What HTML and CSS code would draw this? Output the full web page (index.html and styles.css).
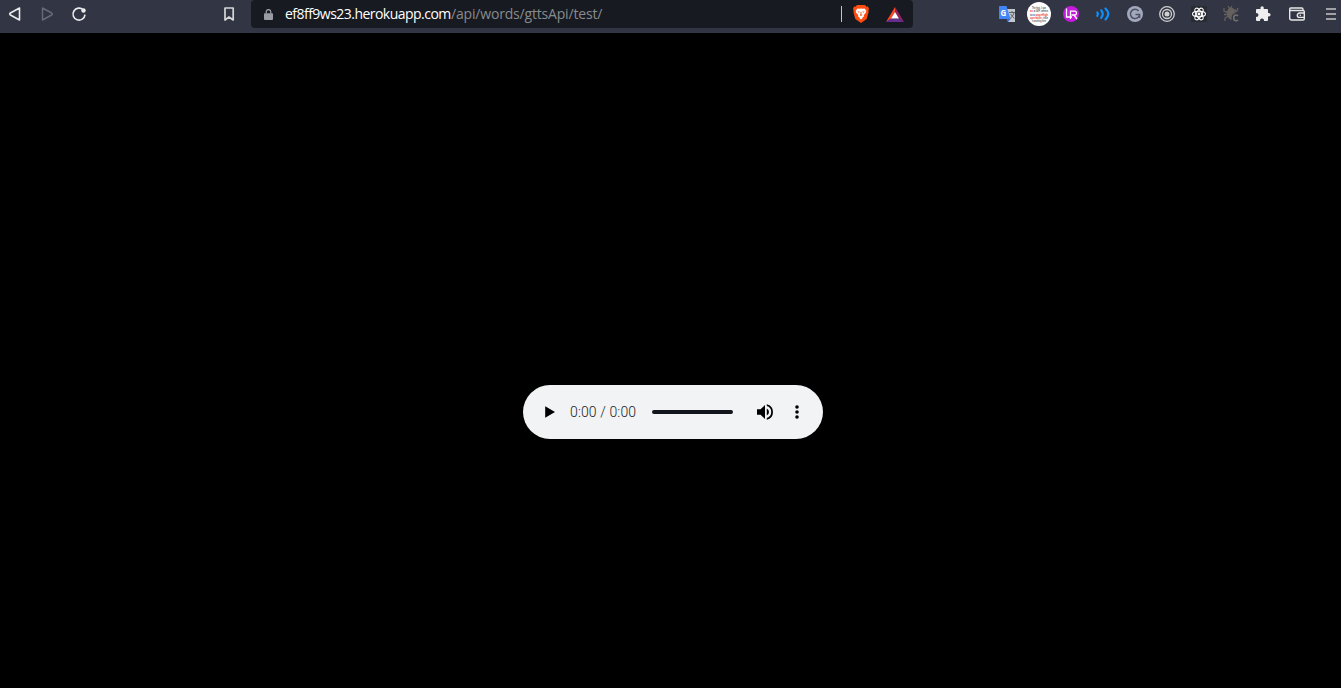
FILE: index.html
```html
<!DOCTYPE html>
<html lang="en">
<head>
<meta charset="utf-8">
<title>Audio</title>
<link rel="stylesheet" href="styles.css">
</head>
<body>
<header class="toolbar">
  <nav class="nav">
    <svg class="icon light" viewBox="0 0 32 28"><path d="M20.500 8v12L11.400 15q-1.400-1 0-2z"/></svg>
    <svg class="icon dim" viewBox="0 0 32 28"><path d="M11.500 8v12l9.200-5q1.400-1 0-2z"/></svg>
    <svg class="icon light" viewBox="0 0 32 28"><path d="M20.200 9.8A6 6 0 1 0 22 14.7"/><circle class="solid" cx="20.5" cy="10.5" r="2.2"/></svg>
  </nav>
  <svg class="icon bookmark" viewBox="0 0 32 28"><path d="M12 8h8.2v12L16 17l-4 3z"/></svg>
  <div class="address">
    <svg class="lock" viewBox="0 0 10 12"><path class="grey" d="M1 4.5h8q1 0 1 1V11q0 1-1 1H1q-1 0-1-1V5.500q0-1 1-1z"/><path class="shackle" d="M2.500 5V3a2.500 2.500 0 0 1 5 0v2"/></svg>
    <div class="url"><span class="host">ef8ff9ws23.herokuapp.com</span><span class="path">/api/words/gttsApi/test/</span></div>
    <div class="shields">
      <svg class="brave" viewBox="0 0 16 18"><path fill="#ff4c10" d="M4 0h8l1.500 1.700L15 1.600 16 4l-.6 1.500.2 1.500-1.900 7L8 18l-5.700-4L.4 7l.2-1.500L0 4l1-2.400 1.500.1z"/><path fill="#fff" d="m4.500 3.400 1.800.4L8 3.500l1.700.3 1.800-.4 1.800 2.400-.5 1.900-2 2.300.2 1.500-1.600.7.400.8L8 14.600 6.200 13l.4-.8-1.600-.7.200-1.500-2-2.300-.5-1.900z"/><path fill="#ff4c10" d="m4.200 6.200 2.500.5-.8 1zM11.800 6.200l-2.500.5.8 1zM7.500 7h1l-.1 2.200 1 .8L8 11l-1.400-1 1-.8z"/></svg>
      <svg class="bat" viewBox="0 0 18 15"><path fill="#ff4724" d="M9 0v5L5 11.500 0 15z"/><path fill="#9e1f63" d="M9 0v5l4.300 6.500L18 15z"/><path fill="#662d91" d="m0 15 5-3.500h8.300L18 15z"/><path fill="#fff" d="m9 5 4 6.500H5z"/></svg>
    </div>
  </div>
  <div class="extensions">
    <svg class="icon" viewBox="0 0 32 28"><path fill="#c3c7cc" d="M14 9h10v13h-7z"/><path fill="#4285f4" d="M8.500 6h7l4 13H8.500Q8 19 8 18V7q0-1 .5-1z"/><path fill="#3367d6" d="M15.500 19h4L17 22z"/><path stroke="#59636b" d="M18 12.500h6M21 11v1.500M23 13q-1.300 4-4 5.500M19.500 14l3.800 4.500"/><text class="translate-g" x="9.500" y="15.500">G</text></svg>
    <svg class="icon" viewBox="0 0 32 28"><circle cx="16" cy="14" r="12" fill="#fff"/><g class="note"><text x="9" y="8.500" textLength="14" lengthAdjust="spacingAndGlyphs">The fast, I can</text><text x="7" y="12" textLength="18" lengthAdjust="spacingAndGlyphs"><tspan class="red">as</tspan> a GIF, when</text><text x="7" y="15.500" textLength="18" lengthAdjust="spacingAndGlyphs">to a <tspan class="red">pageHigh</tspan></text><text x="7" y="18.800" textLength="18" lengthAdjust="spacingAndGlyphs"><tspan class="red">operation</tspan>, title</text><text x="9" y="22" textLength="14" lengthAdjust="spacingAndGlyphs">is working here</text></g></svg>
    <svg class="icon" viewBox="0 0 32 28"><circle cx="16" cy="14" r="8" fill="#c51bdc"/><path stroke="#fff" stroke-width="1.300" d="M11.500 8.500v8.500h5.500M15.500 19v-7.800h4q2 0 2 1.900t-2 1.900h-3M19 15l3 4"/></svg>
    <svg class="icon" viewBox="0 0 32 28"><path stroke="#0c91ff" stroke-width="2.200" stroke-linecap="round" d="M10.300 12.300q1.300 1.700 0 3.600M14.200 10.300q3 3.700 0 7.600M18.500 8.500q5.500 5.500 0 11"/></svg>
    <svg class="icon" viewBox="0 0 32 28"><circle cx="16" cy="14" r="8" fill="#a3a8bf"/><path stroke="#4d5262" stroke-width="1.500" d="M19.600 11a4.600 4.600 0 1 0 1 3.500H16.500M20.600 14.500V18"/></svg>
    <svg class="icon" viewBox="0 0 32 28"><g stroke="#d0d0cf" stroke-width="1.300"><circle cx="16" cy="14" r="7.300"/><circle cx="16" cy="14" r="4.500"/></g><circle cx="16" cy="14" r="2.500" fill="#d0d0cf"/></svg>
    <svg class="icon" viewBox="0 0 32 28"><path fill="#282b31" d="M8 6h16v16H8z"/><g stroke="#fff" stroke-width="1.100"><ellipse cx="16" cy="14" rx="6.500" ry="2.700"/><ellipse cx="16" cy="14" rx="6.500" ry="2.700" transform="rotate(60 16 14)"/><ellipse cx="16" cy="14" rx="6.500" ry="2.700" transform="rotate(120 16 14)"/></g><circle cx="16" cy="14" r="1.400" fill="#fff"/></svg>
    <svg class="icon" viewBox="0 0 32 28"><path fill="#65605e" d="M13 9q3-2.500 6 0l1 4q0 5-4 7-4-2-4-7z"/><path stroke="#65605e" stroke-width="1.300" d="m13 6 2 3 2-3M9 8v3l4 2M23 8l-1 3-4 2M9 14.500h12M10 21v-3l4-2.500M11 12l10-2"/><path stroke="#323544" stroke-width="3" d="M23 15.500q-5-2-5 2.300t5 2.700"/><path stroke="#766e68" stroke-width="1.600" d="M23 15.900q-1-1-2.300-.8-2 .3-2 2.800t2 2.800q1.300.2 2.300-.8"/></svg>
    <svg class="icon" viewBox="0 0 32 28"><path fill="#eee" d="M10 9h3.500q-.5-2.500 1.500-2.700 2.200.2 1.700 2.700H20q1 0 1 1v3q2.600-.4 2.600 1.700T21 16.400V20q0 1-1 1h-3q.2-2.600-2-2.600T13 21h-3q-1 0-1-1v-3q2.500 0 2.500-2T9 13v-3q0-1 1-1z"/></svg>
    <svg class="icon wallet" viewBox="0 0 32 28"><g stroke="#e8e8e8" stroke-width="1.400"><path d="M22 10.500V9.300Q22 8 20.700 8h-11Q8.700 8 8.700 9.300V18q0 2 2 2H22q1.300 0 1.300-1.300v-7q0-1.200-1.300-1.200H10q-1.300 0-1.300-1.200"/><path d="M23 13h-4.500a2.200 2.200 0 0 0 0 4.400H23"/></g><circle cx="19.300" cy="15.200" r=".8" fill="#eee"/></svg>
    <svg class="icon menu" viewBox="0 0 32 28"><path stroke="#c4c5c8" stroke-width="1.700" d="M11 9h10M11 14h10M11 19h10"/></svg>
  </div>
</header>
<main class="stage">
  <div class="player">
    <svg class="play" viewBox="0 0 10 12"><path d="M.2.3v11.400L10 6z"/></svg>
    <div class="time">0:00 / 0:00</div>
    <div class="track"></div>
    <svg class="volume" viewBox="3 3 18 18"><path d="M3 9v6h4l5 5V4L7 9zm13.500 3A4.500 4.500 0 0 0 14 7.970v8.050A4.470 4.470 0 0 0 16.500 12zM14 3.230v2.060a7 7 0 0 1 0 13.420v2.060a9 9 0 0 0 0-17.540z"/></svg>
    <svg class="more" viewBox="0 0 4 14"><circle cx="2" cy="2" r="1.800"/><circle cx="2" cy="7" r="1.800"/><circle cx="2" cy="12" r="1.800"/></svg>
  </div>
</main>
</body>
</html>
```
FILE: styles.css
```css
* { box-sizing: border-box; }
body {
  margin: 0;
  height: 688px;
  display: flex;
  flex-direction: column;
  overflow: hidden;
  background: #000;
}
svg { display: block; flex: none; fill: none; }
.toolbar {
  display: flex;
  flex: none;
  height: 33px;
  overflow: hidden;
  background: #323544;
}
.nav { display: flex; flex: none; margin-left: -1px; }
.icon { width: 32px; height: 28px; }
.light { stroke: #ececec; stroke-width: 1.6; stroke-linejoin: round; }
.dim { stroke: #666978; stroke-width: 1.5; stroke-linejoin: round; }
.solid { fill: #ececec; stroke: none; }
.bookmark { margin-left: 118px; stroke: #d6d6d6; stroke-width: 1.7; stroke-linejoin: round; }
.address {
  display: flex;
  flex: none;
  align-items: center;
  width: 662px;
  height: 28px;
  margin-left: 6px;
  padding: 0 9px 0 13px;
  border-radius: 4px;
  background: #181a21;
}
.lock { width: 9px; height: 11px; }
.grey { fill: #9a9ca3; }
.shackle { stroke: #9a9ca3; stroke-width: 1.4; }
.url {
  display: flex;
  margin-left: 12px;
  font: 14px/20px "Open Sans", "Noto Sans", sans-serif;
  white-space: nowrap;
}
.host { width: 166px; color: #fff; letter-spacing: -0.53px; }
.path { color: #878a8e; letter-spacing: -0.18px; }
.shields {
  display: flex;
  align-items: center;
  height: 16px;
  margin-left: auto;
  padding-left: 11px;
  border-left: 1px solid #c2c3c5;
}
.brave { width: 16px; height: 18px; }
.bat { width: 18px; height: 15px; margin-left: 17px; }
.extensions { display: flex; flex: none; margin-left: 78px; }
.wallet, .menu { margin-left: 2px; }
.translate-g { font: bold 8px "Open Sans", sans-serif; fill: #fff; }
.note { font: bold 2.6px "Liberation Sans", sans-serif; fill: #555; }
.red { fill: #f0442c; }
.stage {
  flex: 1;
  display: flex;
  align-items: center;
  justify-content: center;
  padding: 103px 0 0 5px;
}
.player {
  display: flex;
  align-items: center;
  width: 300px;
  height: 54px;
  padding: 0 24px 0 22px;
  border-radius: 27px;
  background: #f1f3f4;
}
.player svg { fill: #000; }
.play { width: 10px; height: 12px; }
.time {
  width: 67px;
  margin-left: 15px;
  color: #202224;
  font: 300 14px/20px Roboto, sans-serif;
  letter-spacing: 0.12px;
  white-space: nowrap;
}
.track {
  width: 81px;
  height: 4px;
  margin-left: 15px;
  border-radius: 2px;
  background: #13151c;
}
.volume { width: 16px; height: 16px; margin-left: 24px; }
.more { width: 4px; height: 14px; margin-left: 22px; }
```
